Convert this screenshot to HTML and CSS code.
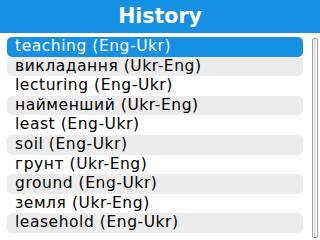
FILE: index.html
```html
<!DOCTYPE html>
<html>
<head>
<meta charset="utf-8">
<link rel="stylesheet" href="styles.css">
</head>
<body>
<div class="screen">
  <div class="header">History</div>
  <div class="content">
    <div class="list">
      <div class="row selected">teaching (Eng-Ukr)</div>
      <div class="row shaded">викладання (Ukr-Eng)</div>
      <div class="row plain">lecturing (Eng-Ukr)</div>
      <div class="row shaded">найменший (Ukr-Eng)</div>
      <div class="row plain">least (Eng-Ukr)</div>
      <div class="row shaded">soil (Eng-Ukr)</div>
      <div class="row plain">грунт (Ukr-Eng)</div>
      <div class="row shaded">ground (Eng-Ukr)</div>
      <div class="row plain">земля (Ukr-Eng)</div>
      <div class="row shaded">leasehold (Eng-Ukr)</div>
    </div>
    <div class="scrollbar"><div class="thumb"></div></div>
  </div>
</div>
</body>
</html>
```
FILE: styles.css
```css
html, body {
  margin: 0;
  padding: 0;
  background: #ffffff;
}
.screen {
  width: 320px;
  height: 240px;
  overflow: hidden;
  font-family: "DejaVu Sans", Verdana, sans-serif;
}
.header {
  height: 33px;
  background: #1590e2;
  color: #ffffff;
  font-weight: bold;
  font-size: 20.5px;
  line-height: 33px;
  text-align: center;
}
.content {
  display: flex;
  padding: 4px 2px 0 7px;
}
.list {
  flex: 1;
  margin-right: 9px;
  display: flex;
  flex-direction: column;
}
.row {
  height: 19.6px;
  line-height: 19.6px;
  font-size: 15.5px;
  letter-spacing: 0.55px;
  color: #000000;
  padding-left: 8px;
  border-radius: 5px;
  white-space: nowrap;
}
.shaded {
  background: #ececec;
}
.plain {
  background: #ffffff;
}
.selected {
  background: #1590e2;
  color: #ffffff;
}
.scrollbar {
  width: 4px;
  height: 198px;
  border: 1px solid #a0a0a0;
  border-radius: 2px;
  margin-top: 1px;
  background: #ffffff;
}
.thumb {
  width: 1px;
  margin-left: 1px;
  height: 100%;
  background: #c8c8c8;
}
```
